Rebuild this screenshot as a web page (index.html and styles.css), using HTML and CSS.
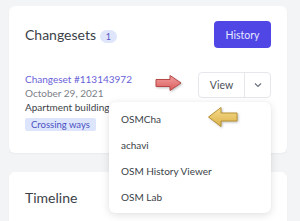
FILE: index.html
```html
<!DOCTYPE html>
<html>
<head>
<meta charset="utf-8">
<link rel="stylesheet" href="styles.css">
</head>
<body>
<div class="page">
  <section class="card card-changesets">
    <div class="card-head">
      <h2 class="title">Changesets <span class="count">1</span></h2>
      <button class="btn-primary">History</button>
    </div>
    <div class="cs-row">
      <div class="cs-info">
        <a class="cs-link">Changeset #113143972</a>
        <div class="cs-date">October 29, 2021</div>
        <div class="cs-desc">Apartment building</div>
        <span class="tag">Crossing ways</span>
      </div>
      <div class="cs-actions">
        <svg class="arrow arrow-red" width="30" height="18" viewBox="0 0 30 18">
          <defs>
            <linearGradient id="gr" x1="0" y1="0" x2="0" y2="1">
              <stop offset="0" stop-color="#f4a0a0"/>
              <stop offset="1" stop-color="#d95c5c"/>
            </linearGradient>
          </defs>
          <path d="M2 5.5 H16 V1.5 L27 9 L16 16.5 V12.5 H2 Z" fill="url(#gr)" stroke="#b74848" stroke-width="1" stroke-linejoin="round"/>
        </svg>
        <div class="split">
          <button class="split-main">View</button>
          <button class="split-toggle">
            <svg width="8" height="6" viewBox="0 0 8 6"><path d="M1 1.5 L4 4.5 L7 1.5" fill="none" stroke="#6b7280" stroke-width="1.2"/></svg>
          </button>
        </div>
        <ul class="menu">
          <li>OSMCha</li>
          <li>achavi</li>
          <li>OSM History Viewer</li>
          <li>OSM Lab</li>
        </ul>
        <svg class="arrow arrow-yellow" width="32" height="22" viewBox="0 0 32 22">
          <defs>
            <linearGradient id="gy" x1="0" y1="0" x2="0" y2="1">
              <stop offset="0" stop-color="#f6dc8c"/>
              <stop offset="1" stop-color="#dbb14a"/>
            </linearGradient>
          </defs>
          <path d="M1.5 11 L14 1.5 V7 H30 V15 H14 V20.5 Z" fill="url(#gy)" stroke="#b89234" stroke-width="1" stroke-linejoin="round"/>
        </svg>
      </div>
    </div>
  </section>
  <section class="card card-timeline">
    <h2 class="title">Timeline</h2>
  </section>
</div>
</body>
</html>
```

FILE: styles.css
```css
* { box-sizing: border-box; }
html, body { margin: 0; padding: 0; }
body {
  background: #f3f4f6;
  font-family: "Lato", "Noto Sans", sans-serif;
  color: #374151;
  width: 300px;
  height: 221px;
  overflow: hidden;
}
.page {
  padding: 6px 13px 0 9px;
  display: flex;
  flex-direction: column;
  gap: 19px;
}
.card {
  background: #fff;
  border-radius: 6px;
  box-shadow: 0 1px 2px rgba(0,0,0,0.04);
}
.card-changesets {
  padding: 15px 16px 22px 16px;
}
.card-head {
  display: flex;
  justify-content: space-between;
  align-items: center;
}
.title {
  margin: 0;
  font-size: 14px;
  font-weight: 400;
  color: #3b3f48;
  display: flex;
  align-items: center;
  gap: 4px;
}
.count {
  display: inline-flex;
  align-items: center;
  justify-content: center;
  width: 17px;
  height: 13px;
  border-radius: 7px;
  background: #dfe6fb;
  color: #5a55c8;
  font-size: 9px;
  margin-top: 3px;
}
.btn-primary {
  width: 57px;
  height: 27px;
  border: none;
  border-radius: 4px;
  background: #4f46e5;
  color: #e6e8ff;
  font-family: inherit;
  font-size: 10.5px;
  padding: 0;
}
.cs-row {
  margin-top: 24px;
  display: flex;
  justify-content: space-between;
  align-items: flex-start;
}
.cs-info {
  display: flex;
  flex-direction: column;
  align-items: flex-start;
  font-size: 10px;
  line-height: 14px;
}
.cs-link { color: #6a5fd8; }
.cs-date { color: #7b7f88; }
.cs-desc { color: #3b3f48; white-space: nowrap; }
.tag {
  margin-top: 4px;
  background: #dde5fc;
  color: #4b50c2;
  font-size: 9.5px;
  line-height: 13px;
  padding: 0 6px;
  border-radius: 2px;
}
.cs-actions {
  position: relative;
  flex: none;
}
.split {
  display: flex;
  height: 26px;
  border: 1px solid #e5e7eb;
  border-radius: 4px;
  background: #fff;
}
.split button {
  border: none;
  background: transparent;
  font-family: inherit;
  padding: 0;
}
.split-main {
  width: 46px;
  font-size: 10.5px;
  color: #4b4f58;
  border-right: 1px solid #e5e7eb !important;
}
.split-toggle {
  width: 25px;
  display: flex;
  align-items: center;
  justify-content: center;
}
.menu {
  position: absolute;
  top: 30px;
  right: 0;
  width: 162px;
  margin: 0;
  padding: 4px 0 3px;
  list-style: none;
  background: #fff;
  border-radius: 6px;
  box-shadow: 0 2px 8px rgba(0,0,0,0.12), 0 0 1px rgba(0,0,0,0.08);
  z-index: 2;
}
.menu li {
  height: 26px;
  line-height: 26px;
  padding-left: 12px;
  font-size: 10px;
  color: #3b3f48;
}
.arrow {
  position: absolute;
  z-index: 3;
  filter: drop-shadow(1px 1px 1px rgba(0,0,0,0.25));
}
.arrow-red { left: -44px; top: 2px; }
.arrow-yellow { left: 9px; top: 34px; }
.card-timeline {
  padding: 17px 16px 20px;
  height: 60px;
}
```
